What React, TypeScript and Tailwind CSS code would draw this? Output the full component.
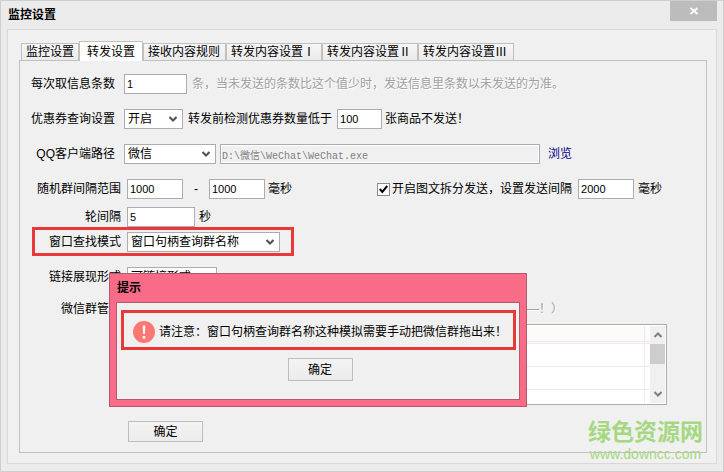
import type { ReactNode } from "react";

const field =
  "h-5 border border-[#abadb3] bg-white px-[2px] text-[11px] leading-[18px] text-black outline-none rounded-none";
const button =
  "border border-[#bdbdbd] bg-linear-to-b from-[#f4f4f4] to-[#ebebeb] text-[12px] leading-4 text-black";

const tabs = [
  { title: "监控设置", width: "w-[58px]" },
  { title: "转发设置", width: "w-16", active: true },
  { title: "接收内容规则", width: "w-[83px]" },
  { title: "转发内容设置Ⅰ", width: "w-24" },
  { title: "转发内容设置Ⅱ", width: "w-24" },
  { title: "转发内容设置Ⅲ", width: "w-24" },
];

function Row(props: { label: string; id: string; wide?: boolean; children: ReactNode }) {
  const { label, id, wide, children } = props;
  return (
    <div className="flex h-5 items-center">
      <label
        htmlFor={id}
        className={wide ? "w-[101px] mr-[6px] shrink-0 text-right" : "w-[95px] mr-[9px] shrink-0 text-right"}
      >
        {label}
      </label>
      {children}
    </div>
  );
}

function Chevron({ className }: { className?: string }) {
  return (
    <svg className={className} width="8" height="6" viewBox="0 0 8 6" fill="none" stroke="currentColor" strokeWidth="2">
      <path d="M0.5 1L4 4.5L7.5 1" />
    </svg>
  );
}

function Select(props: { id: string; width: string; value: string }) {
  const { id, width, value } = props;
  return (
    <div className={`relative shrink-0 ${width}`}>
      <select
        id={id}
        defaultValue={value}
        className="block h-5 w-full appearance-none rounded-none border border-[#abadb3] bg-white pl-[3px] text-[12px] leading-[18px] text-black outline-none"
      >
        <option>{value}</option>
      </select>
      <Chevron className="pointer-events-none absolute right-[6px] top-[7px] text-[#505050]" />
    </div>
  );
}

function GroupList() {
  return (
    <div className="ml-[107px] mr-[39px] mt-[5px] flex h-[81px] border border-[#b0abab] bg-white p-[1px]">
      <table className="h-full flex-1 border-separate border-spacing-0">
        <thead>
          <tr className="h-[18px] bg-[#fdfafa]">
            <th className="border-b-3 border-r border-double border-[#f3e8e8]" />
            <th className="w-[5px] border-b-3 border-double border-[#f3e8e8]" />
          </tr>
        </thead>
        <tbody>
          <tr className="h-[23px]">
            <td className="border-b border-r border-[#ececec]" />
            <td className="border-b border-[#ececec]" />
          </tr>
          <tr className="h-[23px]">
            <td className="border-b border-r border-[#ececec]" />
            <td className="border-b border-[#ececec]" />
          </tr>
          <tr>
            <td className="border-r border-[#ececec]" />
            <td />
          </tr>
        </tbody>
      </table>
      <div className="flex w-[15px] flex-col items-center bg-[#f0f0f0] text-[#808080]">
        <Chevron className="my-[6px] shrink-0 rotate-180" />
        <div className="h-5 w-full shrink-0 bg-[#cdcdcd]" />
        <Chevron className="mb-[6px] mt-auto shrink-0" />
      </div>
    </div>
  );
}

function Notice() {
  return (
    <div
      role="dialog"
      aria-labelledby="notice-title"
      className="absolute left-[108px] top-[272px] w-[418px] border border-[#b35a70] bg-[#f86c88] px-[6px] pb-[6px]"
    >
      <h2 id="notice-title" className="h-7 pl-[1px] text-[12px] font-bold leading-7">
        提示
      </h2>
      <div className="flex h-[98px] flex-col items-center border border-[#b35a70] bg-[#f0f0f0] pl-1 pr-[3px] pt-[7px]">
        <div className="flex h-10 w-full items-center border-3 border-[#e8393a] pl-[9px] pt-[3px]">
          <svg className="mr-[4px] shrink-0" width="22" height="22" viewBox="0 0 22 22">
            <circle cx="11" cy="11" r="11" fill="#ff7672" />
            <path d="M9.7 4.5h2.6l-.4 8.5h-1.8z" fill="#fff" />
            <rect x="9.7" y="15" width="2.6" height="2.6" fill="#fff" />
          </svg>
          请注意：窗口句柄查询群名称这种模拟需要手动把微信群拖出来！
        </div>
        <button className={`${button} ml-[3px] mt-2 h-[23px] w-[65px]`}>确定</button>
      </div>
    </div>
  );
}

export default function App() {
  return (
    <div className="relative flex min-h-screen flex-col border border-[#cfcfcf] bg-[#ebebeb] px-[6px] pb-[7px] font-['Liberation_Sans','Noto_Sans_CJK_SC',sans-serif] text-[12px] leading-4 text-black">
      <header className="flex h-7 items-start justify-between">
        <h1 className="pl-[1px] text-[12px] font-bold leading-7">监控设置</h1>
        <button aria-label="关闭" className="flex h-5 w-[47px] items-center justify-center bg-[#bcbcbc]">
          <svg width="8" height="8" viewBox="0 0 8 8" stroke="#fff" strokeWidth="1.8">
            <path d="M0.5 1L7.5 7M7.5 1L0.5 7" />
          </svg>
        </button>
      </header>

      <main className="flex flex-1 flex-col border border-[#d9d9d9] bg-[#f0f0f0] pb-[10px] pl-[11px] pr-[9px] pt-[11px]">
        <div className="flex items-end pl-[2px]" role="tablist">
          {tabs.map((tab) => (
            <button
              key={tab.title}
              role="tab"
              aria-selected={!!tab.active}
              className={
                tab.active
                  ? `${tab.width} relative -mb-px h-5 border border-b-0 border-[#c0c0c0] bg-white whitespace-nowrap`
                  : `${tab.width} h-[17px] border border-b-0 border-[#c0c0c0] bg-linear-to-b from-[#f6f6f6] to-[#ebebeb] pl-1 text-left whitespace-nowrap`
              }
            >
              {tab.title}
            </button>
          ))}
        </div>

        <section className="flex-1 border border-[#c0c0c0] pt-[13px]">
          <div className="flex flex-col gap-[15px]">
            <Row label="每次取信息条数" id="count">
              <input id="count" defaultValue="1" className={`${field} w-[63px]`} />
              <span className="ml-[5px] text-[#a0a0a0] [text-shadow:1px_1px_0_#fff]">
                条，当未发送的条数比这个值少时，发送信息里条数以未发送的为准。
              </span>
            </Row>
            <Row label="优惠券查询设置" id="coupon">
              <Select id="coupon" width="w-[59px]" value="开启" />
              <label htmlFor="limit" className="ml-[5px]">
                转发前检测优惠券数量低于
              </label>
              <input id="limit" defaultValue="100" className={`${field} ml-[5px] w-[45px]`} />
              <span className="ml-[3px]">张商品不发送！</span>
            </Row>
            <Row label="QQ客户端路径" id="client">
              <Select id="client" width="w-[92px]" value="微信" />
              <input
                aria-label="路径"
                readOnly
                defaultValue="D:\微信\WeChat\WeChat.exe"
                className="ml-1 h-5 w-80 border border-[#abadb3] bg-[#f0f0f0] px-[1px] font-['Liberation_Mono','Noto_Sans_CJK_SC',monospace] text-[10px] leading-4 text-[#808080] shadow-[inset_0_0_0_1px_#fff] outline-none"
              />
              <a href="#" className="ml-2 text-[#00007f]">
                浏览
              </a>
            </Row>
          </div>

          <div className="mt-[15px] flex flex-col gap-2">
            <Row label="随机群间隔范围" id="from" wide>
              <input id="from" defaultValue="1000" className={`${field} w-14`} />
              <span className="w-[26px] text-center">-</span>
              <input aria-label="最大间隔" defaultValue="1000" className={`${field} w-14`} />
              <span className="ml-[3px]">毫秒</span>
              <input
                id="split"
                type="checkbox"
                defaultChecked
                className="ml-[85px] size-[13px] appearance-none border border-[#8a8a8a] bg-white"
              />
              <svg
                className="pointer-events-none -ml-[11px] mr-[2px]"
                width="9"
                height="9"
                viewBox="0 0 9 9"
                fill="none"
                stroke="#000"
                strokeWidth="2"
              >
                <path d="M0.8 4L3.3 7L8.2 1" />
              </svg>
              <label htmlFor="split" className="ml-[2px]">
                开启图文拆分发送，设置发送间隔
              </label>
              <input aria-label="发送间隔" defaultValue="2000" className={`${field} ml-[6px] w-14`} />
              <span className="ml-1">毫秒</span>
            </Row>
            <Row label="轮间隔" id="round" wide>
              <input id="round" defaultValue="5" className={`${field} w-[68px]`} />
              <span className="ml-1">秒</span>
            </Row>
          </div>

          <div className="ml-3 flex h-[29px] w-[262px] items-center border-3 border-[#e8393a]">
            <div className="-ml-[15px]">
              <Row label="窗口查找模式" id="mode" wide>
                <Select id="mode" width="w-[153px]" value="窗口句柄查询群名称" />
              </Row>
            </div>
          </div>

          <div className="mt-[11px] flex flex-col gap-3">
            <Row label="链接展现形式" id="style" wide>
              <Select id="style" width="w-[90px]" value="可链接形式" />
            </Row>
            <Row label="微信群管理" id="groups" wide>
              <span className="ml-[400px] text-[#a0a0a0] [text-shadow:1px_1px_0_#fff]">—！）</span>
            </Row>
          </div>
          <GroupList />
          <button className={`${button} ml-[108px] mt-4 h-[21px] w-[75px]`}>确定</button>
        </section>
      </main>

      <Notice />

      <div className="pointer-events-none absolute bottom-[9px] right-[20px] text-center text-[#a5d880]">
        <div className="text-[23px] font-bold leading-7">绿色资源网</div>
        <div className="text-[14px] leading-4">www.downcc.com</div>
      </div>
    </div>
  );
}
